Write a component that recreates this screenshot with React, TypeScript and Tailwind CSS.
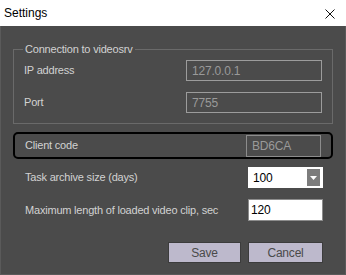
export default function App() {
  return (
    <div className="flex h-[275px] w-[346px] flex-col overflow-hidden font-['Liberation_Sans',Arial,sans-serif] text-[11px] tracking-[-0.2px]">
      {/* title bar */}
      <div className="flex h-[26px] shrink-0 items-center justify-between bg-white pl-[4px] pr-[11px] text-[12px] tracking-normal text-black">
        <span>Settings</span>
        <svg width="10" height="10" viewBox="0 0 10 10" className="mt-[1px]">
          <path d="M0.5 0.5 L9.5 9.5 M9.5 0.5 L0.5 9.5" stroke="#111" strokeWidth="1" />
        </svg>
      </div>

      <div className="flex flex-1 flex-col border-x border-b border-[#5a5a5a] bg-[#4b4b4b] px-[12px] pt-[15px] text-[#d2d2d2]">
        <fieldset className="border border-[#6a6a6a] pb-[10px]">
          <legend className="ml-[9px] px-[2px] leading-[16px]">Connection to videosrv</legend>
          <div className="mt-[3px] flex h-[21px] items-center pl-[10px] pr-[10px]">
            <span className="flex-1">IP address</span>
            <div className="flex h-[21px] w-[136px] items-center border border-[#9c9c9c] px-[5px] text-[12px] text-[#9a9a9a]">
              127.0.0.1
            </div>
          </div>
          <div className="mt-[11px] flex h-[21px] items-center pl-[10px] pr-[10px]">
            <span className="flex-1">Port</span>
            <div className="flex h-[21px] w-[136px] items-center border border-[#9c9c9c] px-[5px] text-[12px] text-[#9a9a9a]">
              7755
            </div>
          </div>
        </fieldset>

        <div className="mt-[8px] flex h-[27px] items-center rounded-[5px] border-2 border-black pl-[10px] pr-[10px]">
          <span className="flex-1">Client code</span>
          <div className="flex h-[22px] w-[75px] items-center border border-[#8c8c8c] px-[5px] text-[12px] text-[#9a9a9a]">
            BD6CA
          </div>
        </div>

        <div className="mt-[8px] flex h-[21px] items-center pl-[12px] pr-[10px]">
          <span className="flex-1">Task archive size (days)</span>
          <div className="flex h-[21px] w-[75px] items-center justify-between bg-white pl-[5px] pr-[3px] text-[12px] text-black">
            <span>100</span>
            <div className="flex h-[17px] w-[13px] items-center justify-center bg-[#7c7c7c]">
              <svg width="7" height="4" viewBox="0 0 7 4">
                <path d="M0 0 L7 0 L3.5 4 Z" fill="#fff" />
              </svg>
            </div>
          </div>
        </div>

        <div className="mt-[11px] flex h-[22px] items-center pl-[12px] pr-[10px]">
          <span className="flex-1">Maximum length of loaded video clip, sec</span>
          <div className="flex h-[22px] w-[75px] items-center border border-[#8c8c8c] bg-white px-[2px] text-[12px] text-black">
            120
          </div>
        </div>

        <div className="mt-[21px] flex justify-end gap-[7px] pr-[10px]">
          <button className="h-[21px] w-[73px] border border-[#3c3c3c] bg-[#bdb9cc] text-[12px] text-[#4a4a4a]">
            Save
          </button>
          <button className="h-[21px] w-[75px] border border-[#3c3c3c] bg-[#bdb9cc] text-[12px] text-[#4a4a4a]">
            Cancel
          </button>
        </div>
      </div>
    </div>
  );
}
